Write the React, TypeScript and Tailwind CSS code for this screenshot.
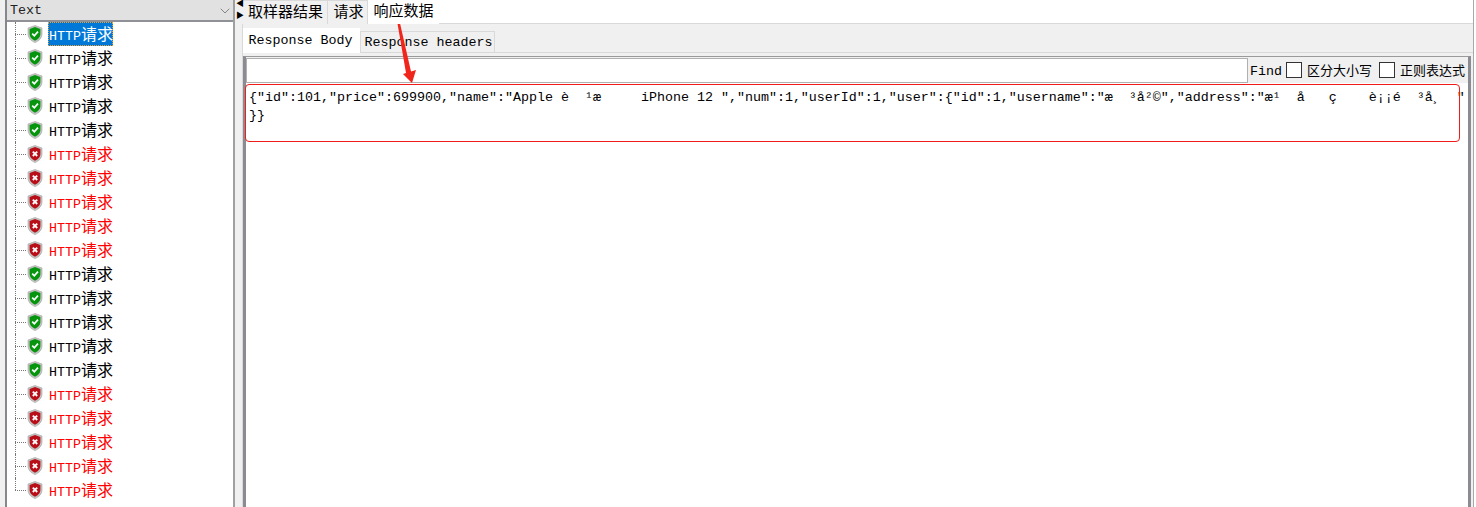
import { ChevronDown } from 'lucide-react';

type Status = 'ok' | 'fail';

const ROWS: Status[] = [
  'ok', 'ok', 'ok', 'ok', 'ok',
  'fail', 'fail', 'fail', 'fail', 'fail',
  'ok', 'ok', 'ok', 'ok', 'ok',
  'fail', 'fail', 'fail', 'fail', 'fail',
];

const MONO = 'font-["Liberation_Mono","Noto_Sans_CJK_SC",monospace]';
const CJK = 'font-["Noto_Sans_CJK_SC",sans-serif]';

function ShieldIcon({ status }: { status: Status }) {
  const ok = status === 'ok';
  return (
    <svg width="16" height="18" viewBox="0 0 16 18" className="shrink-0">
      <path d="M8 0.5 L15 3 V9 C15 13 12 16 8 17.5 C4 16 1 13 1 9 V3 Z" fill="#c4c4c4" stroke="#a2a2a2" strokeWidth="0.6" />
      <path d="M8 2 L13.4 4 V9 C13.4 12 11.2 14.4 8 15.8 C4.8 14.4 2.6 12 2.6 9 V4 Z" fill={ok ? '#06960e' : '#b80f18'} />
      {ok ? (
        <path d="M5.2 8.6 L7.3 10.8 L11 6.6" fill="none" stroke="#fff" strokeWidth="1.7" />
      ) : (
        <path d="M5.8 6.6 L10.2 11 M10.2 6.6 L5.8 11" fill="none" stroke="#fff" strokeWidth="1.9" />
      )}
    </svg>
  );
}

function TreeRow({ status, selected, last }: { status: Status; selected: boolean; last: boolean }) {
  const tone = selected ? 'text-white' : status === 'ok' ? 'text-black' : 'text-[#ff0000]';
  return (
    <div className="relative flex h-6 items-center pl-[8px]">
      <div className={`absolute left-[8px] top-0 border-l border-dotted border-[#777] ${last ? 'h-3' : 'h-6'}`} />
      <div className="w-[11px] border-t border-dotted border-[#777]" />
      <div className="ml-px w-[17px]">
        <ShieldIcon status={status} />
      </div>
      <div
        className={`ml-[4px] flex h-6 w-[65px] items-center whitespace-nowrap ${tone} ${
          selected ? 'border border-dotted border-[#f0a030] bg-[#0078d7]' : 'pl-px'
        }`}
      >
        <span className="text-[13.33px]">
          HTTP<span className={`${CJK} text-[16px]`}>请求</span>
        </span>
      </div>
    </div>
  );
}

function Tab({ label, active, width }: { label: string; active?: boolean; width: string }) {
  return (
    <div
      className={`flex items-center justify-center border-[#d9d9d9] text-[15px] ${CJK} ${width} ${
        active ? 'z-10 h-[24px] bg-white pb-[3px]' : 'h-[24px] border-r border-t bg-[#f0f0f0] pb-[2px] pl-[2px]'
      }`}
    >
      {label}
    </div>
  );
}

function FindCheck({ label }: { label: string }) {
  return (
    <div className="flex items-center gap-[5px]">
      <div className="h-[16px] w-[16px] border border-[#333] bg-white" />
      <span className={`${CJK} whitespace-nowrap text-[13px]`}>{label}</span>
    </div>
  );
}

export default function App() {
  return (
    <div className={`relative flex h-[507px] w-[1476px] overflow-hidden bg-white text-black ${MONO}`}>
      <div className="w-[5px] shrink-0 bg-[#f0f0f0]" />
      <div className="flex w-[230px] shrink-0 flex-col border-x-2 border-l-[#85878c] border-r-[#a0a0a0]">
        <div className="flex h-[22px] shrink-0 items-center justify-between border-b-2 border-[#8f9196] bg-[#e1e1e1] pl-[3px] pt-[2px]">
          <span className="text-[13.33px] text-[#222]">Text</span>
          <ChevronDown size={16} strokeWidth={1} color="#555" />
        </div>
        <div className="flex flex-col">
          {ROWS.map((status, i) => (
            <TreeRow key={i} status={status} selected={i === 0} last={i === ROWS.length - 1} />
          ))}
        </div>
      </div>

      <div className="relative w-[7px] shrink-0 bg-[#f0f0f0]">
        <span className="absolute left-[1px] top-0 text-[8px] leading-[8px]">◀</span>
        <span className="absolute left-[1px] top-[12px] text-[8px] leading-[8px]">▶</span>
      </div>

      <div className="flex w-[1232px] shrink-0 flex-col border-r border-[#a8a8a8] bg-white">
        <div className="flex h-[24px] shrink-0 border-b border-[#d9d9d9]">
          <Tab label="取样器结果" width="w-[86px]" />
          <Tab label="请求" width="w-[40px]" />
          <Tab label="响应数据" active width="w-[71px]" />
        </div>
        <div className="flex flex-1 flex-col border-l border-[#d9d9d9] bg-[#f0f0f0] pt-[4px]">
          <div className="flex h-[25px] shrink-0 border-b border-[#d9d9d9]">
            <div className="z-10 flex h-[25px] w-[117px] items-center justify-center bg-white pr-[2px] text-[13.33px]">Response Body</div>
            <div className="mt-[3px] flex h-[22px] w-[135px] items-center justify-center border border-[#d9d9d9] pl-[2px] pt-[2px] text-[13.33px]">Response headers</div>
          </div>
          <div className="mr-[2px] mt-[3px] flex flex-1 flex-col border-x-[3px] border-t border-x-[#8a8c91] border-t-[#9a9a9a]">
            <div className="flex h-[26px] shrink-0 items-center">
              <div className="h-[25px] w-[1002px] border border-[#b0b0b0] bg-white" />
              <span className="ml-[2px] pt-[4px] text-[13.33px]">Find</span>
              <div className="ml-[4px] flex items-center gap-[7px]">
                <FindCheck label="区分大小写" />
                <FindCheck label="正则表达式" />
              </div>
            </div>
            <div className="flex-1 whitespace-pre bg-white pl-[3px] pt-[6px] text-[13.33px] leading-[18px]">
              <div>{'{"id":101,"price":699900,"name":"Apple è  ¹æ     iPhone 12 ","num":1,"userId":1,"user":{"id":1,"username":"æ  ³å²©","address":"æ¹  å   ç    è¡¡é  ³å¸  "'}</div>
              <div>{'}}'}</div>
            </div>
          </div>
        </div>
      </div>

      <div className="pointer-events-none absolute left-[245px] top-[84px] h-[58px] w-[1215px] rounded-[4px] border border-[#f01c1c]" />
      <svg className="pointer-events-none absolute left-[388px] top-[12px]" width="34" height="74" viewBox="0 0 34 74">
        <path d="M8 3 L18 61 L15 62 L24 71 L28 58 L23 59.5 L10 2.5 Z" fill="#f0261c" />
      </svg>
    </div>
  );
}
